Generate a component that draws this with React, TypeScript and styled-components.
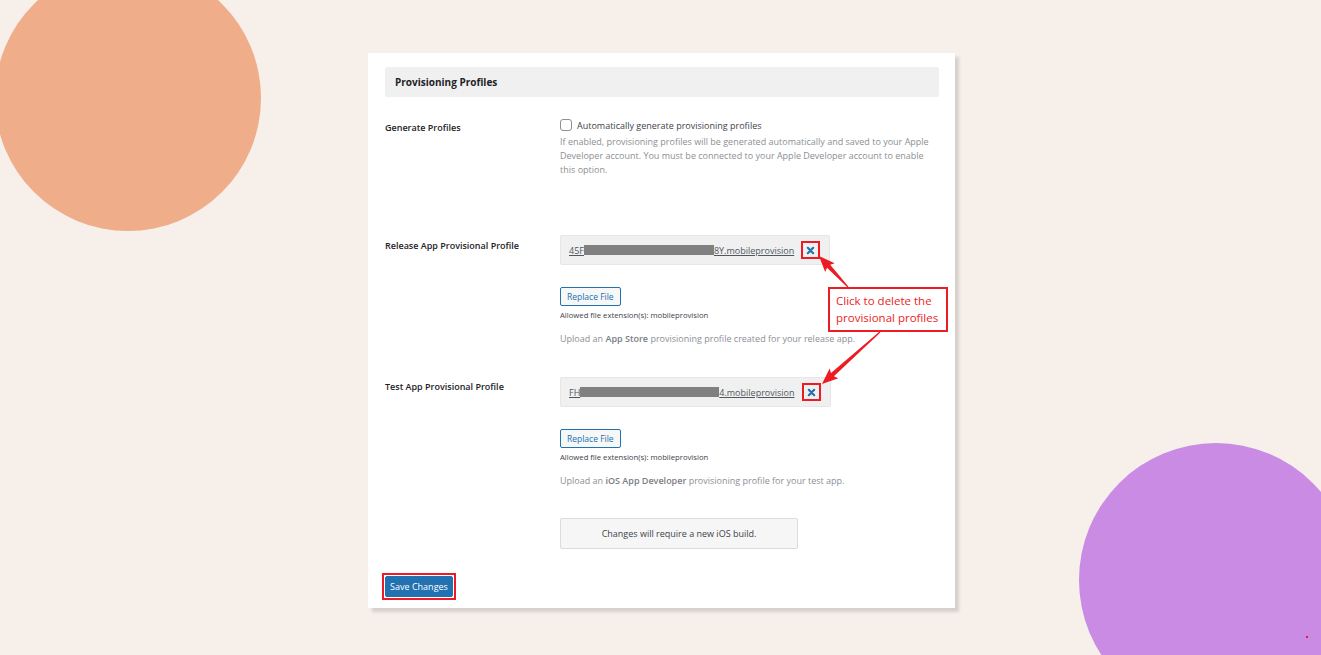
import React from 'react'
import styled, { createGlobalStyle } from 'styled-components'

const GlobalStyle = createGlobalStyle`
  html, body {
    margin: 0;
    padding: 0;
  }
  body {
    background: #f6efea;
    font-family: 'Open Sans', 'Noto Sans', sans-serif;
    color: #3c434a;
  }
`

const RED = '#ed1c24'

const Page = styled.div`
  position: relative;
  width: 1321px;
  height: 655px;
  overflow: hidden;
  box-sizing: border-box;
  padding: 53px 0 0 368px;
`

const Circle = styled.div<{ $x: number; $y: number; $r: number; $color: string }>`
  position: absolute;
  left: ${(p) => p.$x - p.$r}px;
  top: ${(p) => p.$y - p.$r}px;
  width: ${(p) => p.$r * 2}px;
  height: ${(p) => p.$r * 2}px;
  border-radius: 50%;
  background: ${(p) => p.$color};
`

const Dot = styled.div`
  position: absolute;
  left: 1306px;
  top: 636px;
  width: 2px;
  height: 2px;
  background: #e0204a;
`

const Card = styled.div`
  position: relative;
  width: 587px;
  box-sizing: border-box;
  background: #fff;
  padding: 14px 16px 8px 17px;
  box-shadow: 4px 4px 3px rgba(0, 0, 0, 0.13);
`

const SectionHeader = styled.div`
  height: 30px;
  display: flex;
  align-items: center;
  padding-left: 10px;
  background: #f0f0f0;
  border-radius: 2px;
  font-size: 10px;
  font-weight: 700;
  color: #1d2327;
`

const FormRow = styled.div<{ $top: number }>`
  display: grid;
  grid-template-columns: 175px 1fr;
  margin-top: ${(p) => p.$top}px;
`

const Label = styled.div<{ $pad: number }>`
  padding-top: ${(p) => p.$pad}px;
  font-size: 9px;
  line-height: 14px;
  font-weight: 600;
  color: #1d2327;
`

const Field = styled.div`
  display: flex;
  flex-direction: column;
  align-items: flex-start;
`

const CheckLine = styled.label`
  display: flex;
  align-items: center;
  gap: 5px;
  height: 14px;
  font-size: 9px;
  color: #3c434a;
`

const Checkbox = styled.span`
  width: 10px;
  height: 10px;
  border: 1px solid #8c8f94;
  border-radius: 3px;
  background: #fff;
`

const Description = styled.p<{ $top: number }>`
  margin: ${(p) => p.$top}px 0 0;
  font-size: 9px;
  line-height: 14px;
  color: #8c8f94;
  max-width: 372px;

  b {
    font-weight: 600;
    color: #7a7d82;
  }
`

const FileBox = styled.div`
  display: flex;
  align-items: center;
  gap: 7px;
  height: 30px;
  box-sizing: border-box;
  padding: 0 9px 0 8px;
  background: #f0f0f0;
  border: 1px solid #e6e6e6;
  border-radius: 2px;
`

const FileLink = styled.a`
  display: flex;
  align-items: center;
  font-size: 9px;
  color: #50575e;
  text-decoration: underline;
  white-space: nowrap;
`

const Redacted = styled.span<{ $w: number }>`
  display: inline-block;
  width: ${(p) => p.$w}px;
  height: 10px;
  background: #808080;
`

const DeleteButton = styled.span`
  display: flex;
  align-items: center;
  justify-content: center;
  width: 15px;
  height: 14px;
  border: 2px solid ${RED};
  color: #2271b1;
`

const ReplaceButton = styled.button`
  margin-top: 22px;
  height: 19px;
  padding: 0 6px;
  font-family: inherit;
  font-size: 8.5px;
  color: #2271b1;
  background: #f6f7f7;
  border: 1px solid #2271b1;
  border-radius: 2px;
`

const Allowed = styled.div`
  margin-top: 4px;
  font-size: 7.7px;
  line-height: 11px;
  color: #3c434a;
`

const Notice = styled.div`
  width: 238px;
  height: 31px;
  box-sizing: border-box;
  display: flex;
  align-items: center;
  justify-content: center;
  background: #f6f6f6;
  border: 1px solid #dcdcde;
  border-radius: 2px;
  font-size: 9px;
  color: #3c434a;
`

const SaveRow = styled.div`
  margin-top: 24px;
`

const Highlight = styled.span`
  display: inline-flex;
  margin-left: -3px;
  padding: 1px;
  border: 2px solid ${RED};
`

const SaveButton = styled.button`
  height: 21px;
  width: 68px;
  padding: 0;
  font-family: inherit;
  font-size: 9px;
  color: #fff;
  background: #2271b1;
  border: 1px solid #2271b1;
  border-radius: 2px;
`

const Callout = styled.div`
  position: absolute;
  left: 460px;
  top: 234px;
  width: 120px;
  height: 45px;
  box-sizing: border-box;
  padding: 3px 0 0 6px;
  background: #fff;
  border: 2px solid ${RED};
  color: ${RED};
  font-size: 11.5px;
  line-height: 17px;
`

const Overlay = styled.svg`
  position: absolute;
  left: 0;
  top: 0;
  width: 100%;
  height: 100%;
  pointer-events: none;
`

const arrowPoints = (x1: number, y1: number, x2: number, y2: number) => {
  const len = Math.hypot(x2 - x1, y2 - y1)
  const ux = (x2 - x1) / len
  const uy = (y2 - y1) / len
  const px = -uy
  const py = ux
  const head = 14
  const bx = x2 - ux * head
  const by = y2 - uy * head
  const pts = [
    [x1 + px * 0.6, y1 + py * 0.6],
    [bx + px * 2.2, by + py * 2.2],
    [bx - ux * 2 + px * 6.5, by - uy * 2 + py * 6.5],
    [x2, y2],
    [bx - ux * 2 - px * 6.5, by - uy * 2 - py * 6.5],
    [bx - px * 2.2, by - py * 2.2],
    [x1 - px * 0.6, y1 - py * 0.6],
  ]
  return pts.map((p) => p.map((v) => v.toFixed(1)).join(',')).join(' ')
}

const CloseIcon = () => (
  <svg width="9" height="9" viewBox="0 0 10 10">
    <path d="M2 2 L8 8 M8 2 L2 8" stroke="currentColor" strokeWidth="2.4" strokeLinecap="round" />
  </svg>
)

type ProfileProps = {
  top: number
  labelPad: number
  label: string
  head: string
  redactWidth: number
  tail: string
  children: React.ReactNode
}

const ProfileRow = ({ top, labelPad, label, head, redactWidth, tail, children }: ProfileProps) => (
  <FormRow $top={top}>
    <Label $pad={labelPad}>{label}</Label>
    <Field>
      <FileBox>
        <FileLink>
          {head}
          <Redacted $w={redactWidth} />
          {tail}
        </FileLink>
        <DeleteButton>
          <CloseIcon />
        </DeleteButton>
      </FileBox>
      <ReplaceButton>Replace File</ReplaceButton>
      <Allowed>Allowed file extension(s): mobileprovision</Allowed>
      <Description $top={11}>{children}</Description>
    </Field>
  </FormRow>
)

const App = () => (
  <>
    <GlobalStyle />
    <Page>
      <Circle $x={128} $y={98} $r={133} $color="#efad89" />
      <Circle $x={1216} $y={580} $r={137} $color="#c98be4" />
      <Dot />
      <Card>
        <SectionHeader>Provisioning Profiles</SectionHeader>

        <FormRow $top={21}>
          <Label $pad={3}>Generate Profiles</Label>
          <Field>
            <CheckLine>
              <Checkbox />
              Automatically generate provisioning profiles
            </CheckLine>
            <Description $top={3}>
              If enabled, provisioning profiles will be generated automatically and saved to your Apple Developer
              account. You must be connected to your Apple Developer account to enable this option.
            </Description>
          </Field>
        </FormRow>

        <ProfileRow top={58} labelPad={4} label="Release App Provisional Profile" head="45F" redactWidth={130} tail="8Y.mobileprovision">
          Upload an <b>App Store</b> provisioning profile created for your release app.
        </ProfileRow>

        <ProfileRow top={31} labelPad={3} label="Test App Provisional Profile" head="FH" redactWidth={139} tail="4.mobileprovision">
          Upload an <b>iOS App Developer</b> provisioning profile for your test app.
        </ProfileRow>

        <FormRow $top={30}>
          <div />
          <Notice>Changes will require a new iOS build.</Notice>
        </FormRow>

        <SaveRow>
          <Highlight>
            <SaveButton>Save Changes</SaveButton>
          </Highlight>
        </SaveRow>

        <Callout>
          Click to delete the
          <br />
          provisional profiles
        </Callout>
        <Overlay>
          <polygon points={arrowPoints(480, 234, 451, 203)} fill={RED} />
          <polygon points={arrowPoints(512, 279, 454, 331)} fill={RED} />
        </Overlay>
      </Card>
    </Page>
  </>
)

export default App
